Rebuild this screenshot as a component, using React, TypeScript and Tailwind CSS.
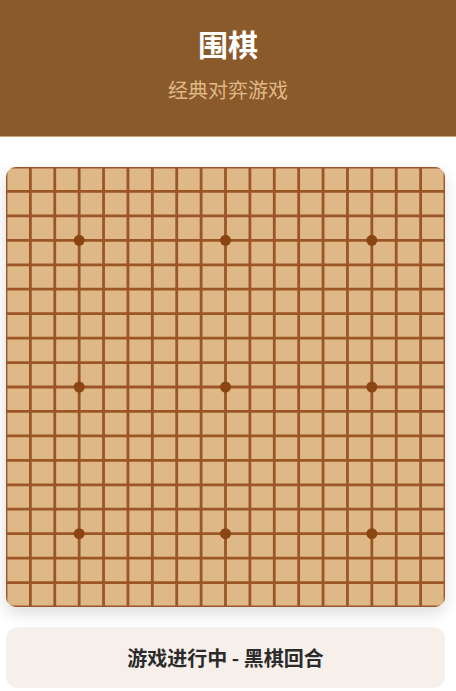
import React from 'react';

const SIZE = 19;
const W = 439;
const H = 440;
const stars = [3, 9, 15];

function Board() {
  const dx = W / (SIZE - 1);
  const dy = H / (SIZE - 1);
  const idx = Array.from({ length: SIZE }, (_, i) => i);
  return (
    <div className="relative w-[439px] h-[440px] rounded-[10px] overflow-hidden bg-[#deb887] shadow-[0_6px_16px_rgba(0,0,0,0.14)]">
      <svg width={W} height={H} viewBox={`0 0 ${W} ${H}`} className="block">
        {idx.map((i) => (
          <line key={`v${i}`} x1={i * dx} y1={0} x2={i * dx} y2={H} stroke="#9c5526" strokeWidth={2.8} />
        ))}
        {idx.map((i) => (
          <line key={`h${i}`} x1={0} y1={i * dy} x2={W} y2={i * dy} stroke="#9c5526" strokeWidth={2.8} />
        ))}
        {stars.map((r) =>
          stars.map((c) => (
            <circle key={`${r}-${c}`} cx={c * dx} cy={r * dy} r={5.5} fill="#8b4513" />
          ))
        )}
      </svg>
    </div>
  );
}

export default function App() {
  return (
    <div className="min-h-screen bg-white font-['Noto_Sans_CJK_SC','Noto_Sans',sans-serif]">
      <header className="h-[137px] bg-[#8b5a2b] flex flex-col items-center border-b border-[#c9a27a]">
        <h1 className="mt-[25px] text-[30px] leading-[36px] font-bold text-white">围棋</h1>
        <p className="mt-[16px] text-[20px] leading-[26px] text-[#deb887]">经典对弈游戏</p>
      </header>
      <main className="px-[6px] pt-[30px] flex flex-col gap-[20px]">
        <Board />
        <div className="w-[439px] h-[61px] rounded-[12px] bg-[#f7f0ea] flex items-center justify-center">
          <span className="text-[20px] font-semibold text-[#2b2b2b]">游戏进行中 - 黑棋回合</span>
        </div>
      </main>
    </div>
  );
}
